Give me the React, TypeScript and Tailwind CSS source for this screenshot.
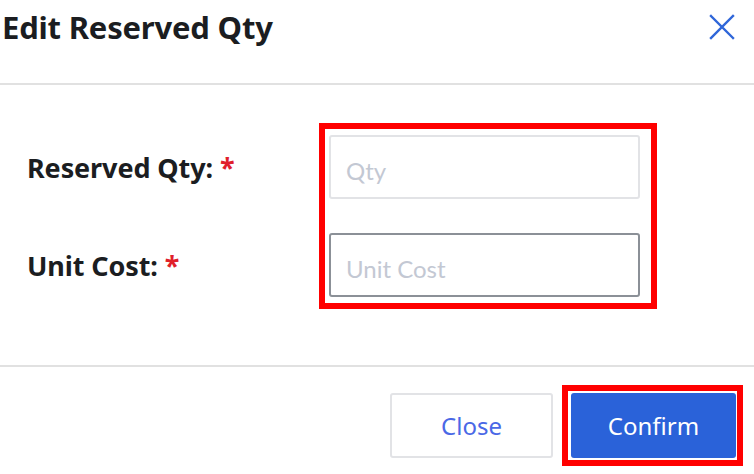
import React from "react";

const sans = "font-['Noto_Sans','Open_Sans',sans-serif]";

function XIcon() {
  return (
    <svg width="26" height="26" viewBox="0 0 26 26" fill="none" stroke="#2f66d9" strokeWidth="2.4" strokeLinecap="square">
      <path d="M2 2 L24 24 M24 2 L2 24" />
    </svg>
  );
}

function Field({ label }: { label: string }) {
  return (
    <div className="h-[64px] flex items-center pt-[3px]">
      <span className="text-[27px] font-bold text-[#1b1d21] tracking-[-0.1px]">
        {label} <span className="text-[#e0202a]">*</span>
      </span>
    </div>
  );
}

export default function App() {
  return (
    <div className={`w-[754px] h-[474px] bg-white overflow-hidden ${sans}`}>
      <header className="h-[85px] flex items-start justify-between border-b-2 border-[#e1e1e1] pl-[2px] pr-[19px]">
        <h1 className="mt-[5px] text-[31px] font-bold text-[#1b1d21] leading-[44px] tracking-[-0.2px]">Edit Reserved Qty</h1>
        <button className="mt-[14px]">
          <XIcon />
        </button>
      </header>

      <section className="h-[280px] flex pl-[27px] pt-[38px]">
        <div className="w-[292px] flex flex-col gap-[34px] pt-[12px]">
          <Field label="Reserved Qty:" />
          <Field label="Unit Cost:" />
        </div>
        <div className="w-[338px] h-[186px] border-[6px] border-[#ff0000] px-[4px] pt-[6px] flex flex-col gap-[34px]">
          <input
            placeholder="Qty"
            className="h-[64px] w-[311px] rounded-[3px] border-2 border-[#e2e3e6] px-[15px] pt-[6px] text-[24px] font-['Lato',sans-serif] placeholder:text-[#c3c8d3] outline-none"
          />
          <input
            placeholder="Unit Cost"
            className="h-[64px] w-[311px] rounded-[3px] border-2 border-[#8b9097] px-[15px] pt-[6px] text-[24px] font-['Lato',sans-serif] placeholder:text-[#c3c8d3] outline-none"
          />
        </div>
      </section>

      <footer className="border-t-2 border-[#e1e1e1] flex justify-end items-start gap-[9px] pr-[11px] pt-[18px]">
        <button className="mt-[8px] w-[163px] h-[65px] rounded-[3px] border-2 border-[#e2e3e6] bg-white text-[24px] text-[#4a68e6]">
          Close
        </button>
        <div className="border-[6px] border-[#ff0000] pl-[3px] pr-[1px] py-[2px]">
          <button className="block w-[165px] h-[65px] rounded-[3px] bg-[#2a62d9] text-[24px] text-white">
            Confirm
          </button>
        </div>
      </footer>
    </div>
  );
}
